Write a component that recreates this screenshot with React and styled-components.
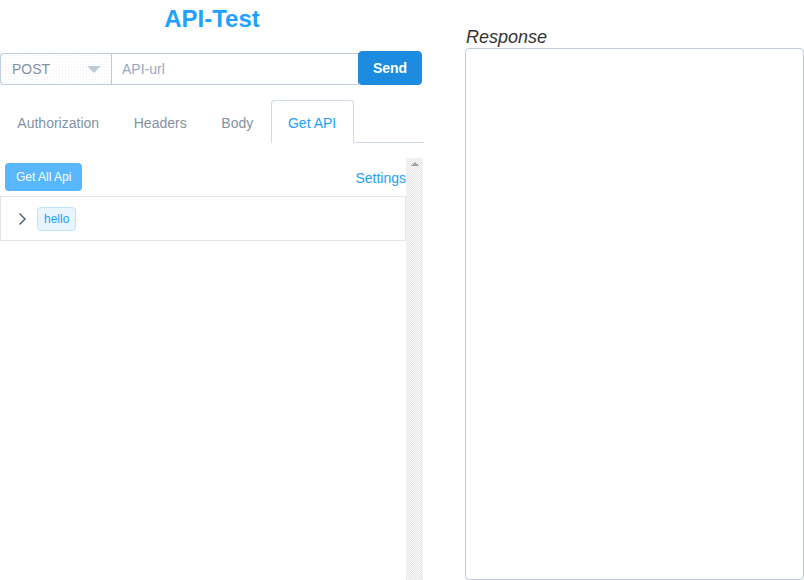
import React from 'react';
import styled, { createGlobalStyle } from 'styled-components';

const GlobalStyle = createGlobalStyle`
    html, body {
        margin: 0;
        padding: 0;
        background: #fff;
        font-family: "Liberation Sans", Arial, sans-serif;
        overflow: hidden;
    }
`;

const Page = styled.div`
    display: flex;
    gap: 41px;
    width: 804px;
    height: 580px;
    overflow: hidden;
`;

const LeftColumn = styled.div`
    width: 424px;
    display: flex;
    flex-direction: column;
`;

const Title = styled.h1`
    margin: 0;
    padding-top: 6px;
    height: 45px;
    font-size: 24px;
    line-height: 26px;
    font-weight: 700;
    color: #20a0ff;
    text-align: center;
`;

const RequestBar = styled.div`
    display: flex;
    align-items: flex-start;
    width: 423px;
    height: 36px;
`;

const MethodSelect = styled.div`
    box-sizing: border-box;
    width: 111px;
    height: 32px;
    margin-top: 2px;
    display: flex;
    align-items: center;
    justify-content: space-between;
    padding: 0 10px 0 11px;
    border: 1px solid #bfcbd9;
    border-right: none;
    border-radius: 4px 0 0 4px;
    background-color: #fff;
    background-image: radial-gradient(#eceff4 0.6px, transparent 0.8px);
    background-size: 3px 3px;
    color: #8391a5;
    font-size: 14px;
`;

const Caret = styled.span`
    width: 0;
    height: 0;
    border-left: 7px solid transparent;
    border-right: 7px solid transparent;
    border-top: 7px solid #bfcbd9;
`;

const UrlInput = styled.div`
    box-sizing: border-box;
    flex: 1;
    height: 32px;
    margin-top: 2px;
    display: flex;
    align-items: center;
    padding-left: 10px;
    border: 1px solid #bfcbd9;
    color: #97a8be;
    font-size: 14px;
`;

const SendButton = styled.button`
    box-sizing: border-box;
    width: 64px;
    height: 34px;
    margin-left: -1px;
    margin-right: 1px;
    border: 1px solid #1d8ce0;
    border-radius: 4px;
    background: #1d8ce0;
    color: #fff;
    font-family: inherit;
    font-size: 14px;
    font-weight: 700;
`;

const TabBar = styled.div`
    display: flex;
    margin-top: 13px;
    height: 42px;
    border-bottom: 1px solid #d1dbe5;
`;

const Tab = styled.div`
    box-sizing: border-box;
    height: 43px;
    padding: 0 16.35px;
    line-height: 44px;
    font-size: 14px;
    color: ${p => (p.$active ? '#20a0ff' : '#8391a5')};
    border: 1px solid ${p => (p.$active ? '#d1dbe5' : 'transparent')};
    border-bottom-color: ${p => (p.$active ? '#fff' : 'transparent')};
    border-radius: ${p => (p.$active ? '4px 4px 0 0' : '0')};
    background: #fff;
`;

const Panel = styled.div`
    display: flex;
    margin-top: 15px;
    width: 423px;
    flex: 1;
`;

const PanelBody = styled.div`
    flex: 1;
    padding-top: 5px;
`;

const Toolbar = styled.div`
    display: flex;
    align-items: center;
    justify-content: space-between;
    padding-left: 5px;
    height: 28px;
    margin-bottom: 5px;
`;

const GetAllButton = styled.button`
    height: 28px;
    padding: 0 11px;
    border: none;
    border-radius: 4px;
    background: #58b7ff;
    color: #fff;
    font-family: inherit;
    font-size: 12px;
`;

const SettingsLink = styled.a`
    color: #20a0ff;
    font-size: 14px;
    padding-top: 2px;
    text-decoration: none;
`;

const TreeBox = styled.div`
    border: 1px solid #dfe6ec;
`;

const TreeRow = styled.div`
    height: 43px;
    display: flex;
    align-items: center;
    padding-left: 16px;
    gap: 10px;
`;

const Tag = styled.span`
    box-sizing: border-box;
    height: 24px;
    line-height: 22px;
    padding: 0 6px;
    border: 1px solid #bde3ff;
    border-radius: 4px;
    background: #e8f5ff;
    color: #20a0ff;
    font-size: 12px;
`;

const ScrollTrack = styled.div`
    width: 17px;
    display: flex;
    justify-content: center;
    padding-top: 4px;
    box-sizing: border-box;
    background-color: #f4f4f4;
    background-image: repeating-conic-gradient(#e4e4e4 0 25%, #fbfbfb 0 50%);
    background-size: 2px 2px;
`;

const ScrollArrow = styled.span`
    width: 0;
    height: 0;
    border-left: 4px solid transparent;
    border-right: 4px solid transparent;
    border-bottom: 4px solid #a0a0a0;
`;

const RightColumn = styled.div`
    flex: 1;
    display: flex;
    flex-direction: column;
    padding-top: 27px;
`;

const ResponseLabel = styled.div`
    font-size: 18px;
    font-style: italic;
    color: #333;
    line-height: 20px;
    padding-left: 1px;
`;

const ResponseArea = styled.div`
    box-sizing: border-box;
    flex: 1;
    margin-top: 1px;
    height: 560px;
    border: 1px solid #bfcbd9;
    border-radius: 4px;
`;

const Chevron = () => (
    <svg width="10" height="14" viewBox="0 0 10 14">
        <path d="M2.5 1.5 L8 7 L2.5 12.5" fill="none" stroke="#48576a" strokeWidth="1.4" />
    </svg>
);

const tabs = ['Authorization', 'Headers', 'Body', 'Get API'];

const App = () => (
    <>
        <GlobalStyle />
        <Page>
            <LeftColumn>
                <Title>API-Test</Title>
                <RequestBar>
                    <MethodSelect>
                        POST
                        <Caret />
                    </MethodSelect>
                    <UrlInput>API-url</UrlInput>
                    <SendButton>Send</SendButton>
                </RequestBar>
                <TabBar>
                    {tabs.map(tab => (
                        <Tab key={tab} $active={tab === 'Get API'}>{tab}</Tab>
                    ))}
                </TabBar>
                <Panel>
                    <PanelBody>
                        <Toolbar>
                            <GetAllButton>Get All Api</GetAllButton>
                            <SettingsLink>Settings</SettingsLink>
                        </Toolbar>
                        <TreeBox>
                            <TreeRow>
                                <Chevron />
                                <Tag>hello</Tag>
                            </TreeRow>
                        </TreeBox>
                    </PanelBody>
                    <ScrollTrack>
                        <ScrollArrow />
                    </ScrollTrack>
                </Panel>
            </LeftColumn>
            <RightColumn>
                <ResponseLabel>Response</ResponseLabel>
                <ResponseArea />
            </RightColumn>
        </Page>
    </>
);

export default App;
